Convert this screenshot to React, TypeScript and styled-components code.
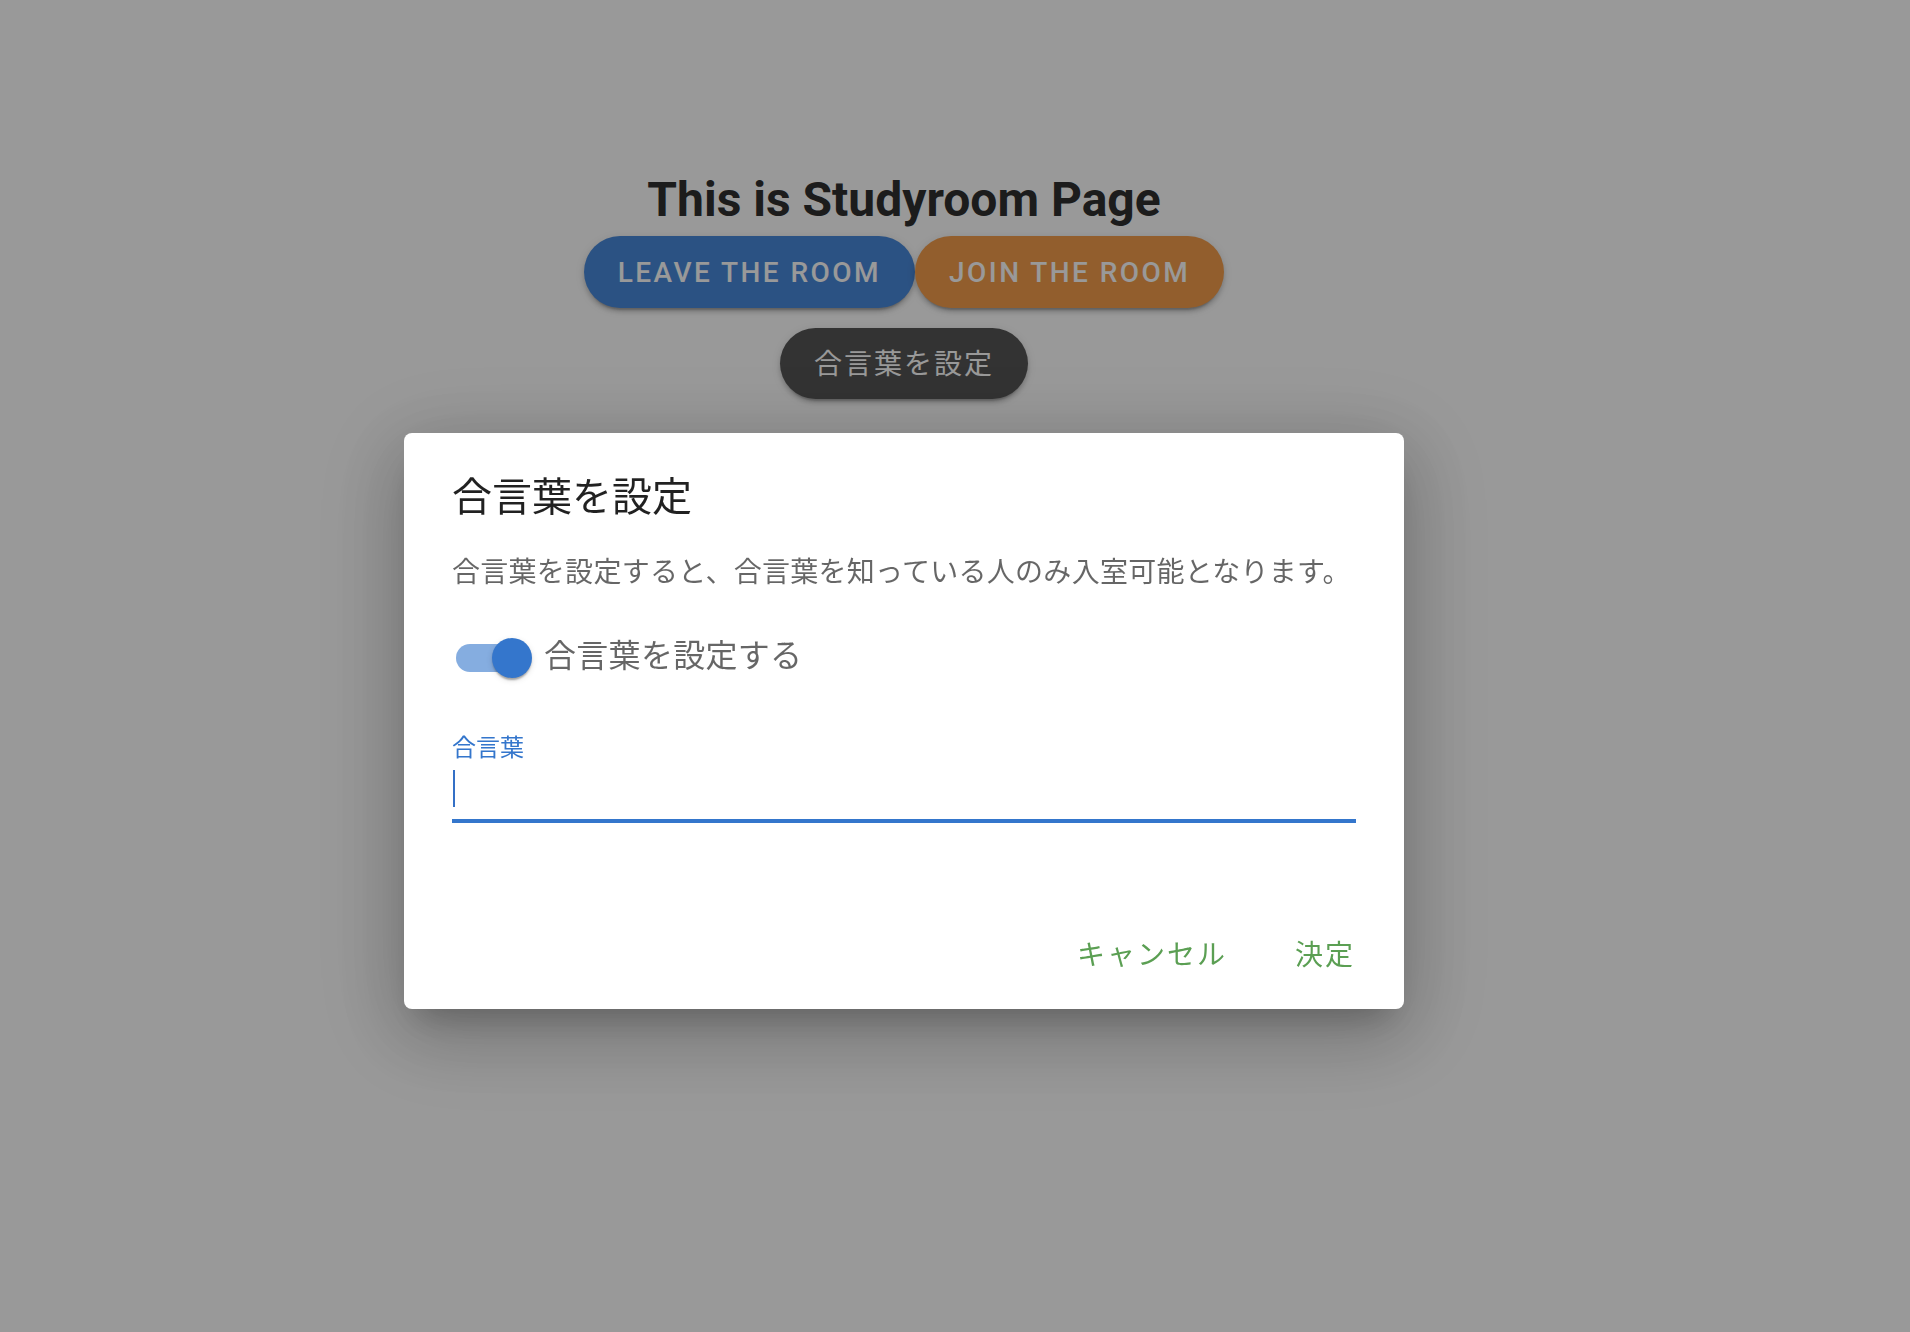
import React from "react";
import styled, { createGlobalStyle } from "styled-components";

const GlobalStyle = createGlobalStyle`
  html, body { margin: 0; padding: 0; background: #ffffff; }
  body { font-family: Roboto, "Noto Sans CJK JP", sans-serif; }
  * { box-sizing: border-box; }
`;

const JP = `"Noto Sans CJK JP", Roboto, sans-serif`;

const Page = styled.main`
  width: 1808px;
  min-height: 1332px;
  display: flex;
  flex-direction: column;
  align-items: center;
  padding-top: 172px;
`;

const Title = styled.h1`
  margin: 0;
  font-family: Roboto, sans-serif;
  font-size: 48px;
  line-height: 56px;
  font-weight: 700;
  color: #303030;
`;

const ButtonRow = styled.div`
  display: flex;
  margin-top: 8px;
`;

const PillButton = styled.button<{ $bg: string; $jp?: boolean }>`
  height: 72px;
  padding: 0 34px;
  border: none;
  border-radius: 36px;
  background: ${(p) => p.$bg};
  color: #ffffff;
  font-family: ${(p) => (p.$jp ? JP : "Roboto, sans-serif")};
  font-size: 28px;
  font-weight: ${(p) => (p.$jp ? 400 : 500)};
  letter-spacing: ${(p) => (p.$jp ? "2px" : "2.45px")};
  text-transform: uppercase;
  box-shadow: 0 6px 2px -4px rgba(0, 0, 0, 0.2), 0 4px 4px 0 rgba(0, 0, 0, 0.14),
    0 2px 10px 0 rgba(0, 0, 0, 0.12);
  cursor: pointer;
`;

const SettingButton = styled(PillButton)`
  margin-top: 20px;
  height: 71px;
  padding-bottom: 4px;
`;

const Backdrop = styled.div`
  position: fixed;
  inset: 0;
  background: rgba(0, 0, 0, 0.4);
  display: flex;
  justify-content: center;
  align-items: flex-start;
  padding: 433px 102px 0 0;
`;

const Dialog = styled.section`
  width: 1000px;
  background: #ffffff;
  border-radius: 8px;
  display: flex;
  flex-direction: column;
  box-shadow: 0 22px 70px 8px rgba(0, 0, 0, 0.14), 0 18px 92px 16px rgba(0, 0, 0, 0.12),
    0 22px 30px -14px rgba(0, 0, 0, 0.2);
  font-family: ${JP};
`;

const DialogTitle = styled.h2`
  margin: 0;
  padding: 29px 48px 0;
  font-size: 40px;
  line-height: 64px;
  font-weight: 400;
  color: rgba(0, 0, 0, 0.87);
`;

const DialogBody = styled.div`
  display: flex;
  flex-direction: column;
  padding: 0 48px 81px;
`;

const Description = styled.p`
  margin: 23px 0 0;
  font-size: 28px;
  line-height: 42px;
  letter-spacing: 0.28px;
  color: rgba(0, 0, 0, 0.6);
`;

const ToggleRow = styled.label`
  display: flex;
  align-items: center;
  margin: 29px 0 0 -18px;
  height: 76px;
  cursor: pointer;
`;

const SwitchRoot = styled.span`
  position: relative;
  width: 112px;
  height: 76px;
  padding: 24px 22px 24px 22px;
  display: flex;
  flex-shrink: 0;
`;

const SwitchTrack = styled.span`
  width: 68px;
  height: 28px;
  border-radius: 14px;
  background: #3476cc;
  opacity: 0.6;
`;

const SwitchThumb = styled.span`
  position: absolute;
  left: 58px;
  top: 18px;
  width: 40px;
  height: 40px;
  border-radius: 50%;
  background: #3476cc;
  box-shadow: 0 4px 2px -2px rgba(0, 0, 0, 0.2), 0 2px 2px 0 rgba(0, 0, 0, 0.14),
    0 2px 6px 0 rgba(0, 0, 0, 0.12);
`;

const ToggleLabel = styled.span`
  font-size: 32px;
  line-height: 48px;
  color: rgba(0, 0, 0, 0.6);
  margin-top: -10px;
  margin-left: -2px;
  letter-spacing: 0.3px;
`;

const FieldLabel = styled.span`
  margin-top: 38px;
  font-size: 24px;
  line-height: 24px;
  color: #3476cc;
`;

const InputBox = styled.div`
  position: relative;
  height: 61px;
`;

const Input = styled.input`
  width: 100%;
  height: 100%;
  border: none;
  outline: none;
  padding: 12px 0 12px;
  font-family: ${JP};
  font-size: 32px;
  background: transparent;
  caret-color: transparent;
`;

const Caret = styled.span`
  position: absolute;
  left: 1px;
  top: 12px;
  width: 2px;
  height: 37px;
  background: #3470c6;
`;

const Underline = styled.div`
  height: 4px;
  background: #3476cc;
`;

const Actions = styled.div`
  display: flex;
  justify-content: flex-end;
  gap: 18px;
  padding: 16px 15px 16px 16px;
`;

const TextButton = styled.button`
  min-width: 128px;
  height: 73px;
  padding: 8px 16px 16px;
  border: none;
  background: transparent;
  color: #5b9f53;
  font-family: ${JP};
  font-size: 28px;
  letter-spacing: 2px;
  border-radius: 8px;
  cursor: pointer;
`;

export default function App() {
  return (
    <>
      <GlobalStyle />
      <Page>
        <Title>This is Studyroom Page</Title>
        <ButtonRow>
          <PillButton $bg="#4989da">Leave the room</PillButton>
          <PillButton $bg="#f39d4b">Join the room</PillButton>
        </ButtonRow>
        <SettingButton $bg="#555555" $jp>
          合言葉を設定
        </SettingButton>
      </Page>
      <Backdrop>
        <Dialog role="dialog" aria-labelledby="dlg-title">
          <DialogTitle id="dlg-title">合言葉を設定</DialogTitle>
          <DialogBody>
            <Description>
              合言葉を設定すると、合言葉を知っている人のみ入室可能となります。
            </Description>
            <ToggleRow>
              <SwitchRoot>
                <SwitchTrack />
                <SwitchThumb />
              </SwitchRoot>
              <ToggleLabel>合言葉を設定する</ToggleLabel>
            </ToggleRow>
            <FieldLabel>合言葉</FieldLabel>
            <InputBox>
              <Input aria-label="合言葉" />
              <Caret />
            </InputBox>
            <Underline />
          </DialogBody>
          <Actions>
            <TextButton>キャンセル</TextButton>
            <TextButton>決定</TextButton>
          </Actions>
        </Dialog>
      </Backdrop>
    </>
  );
}
